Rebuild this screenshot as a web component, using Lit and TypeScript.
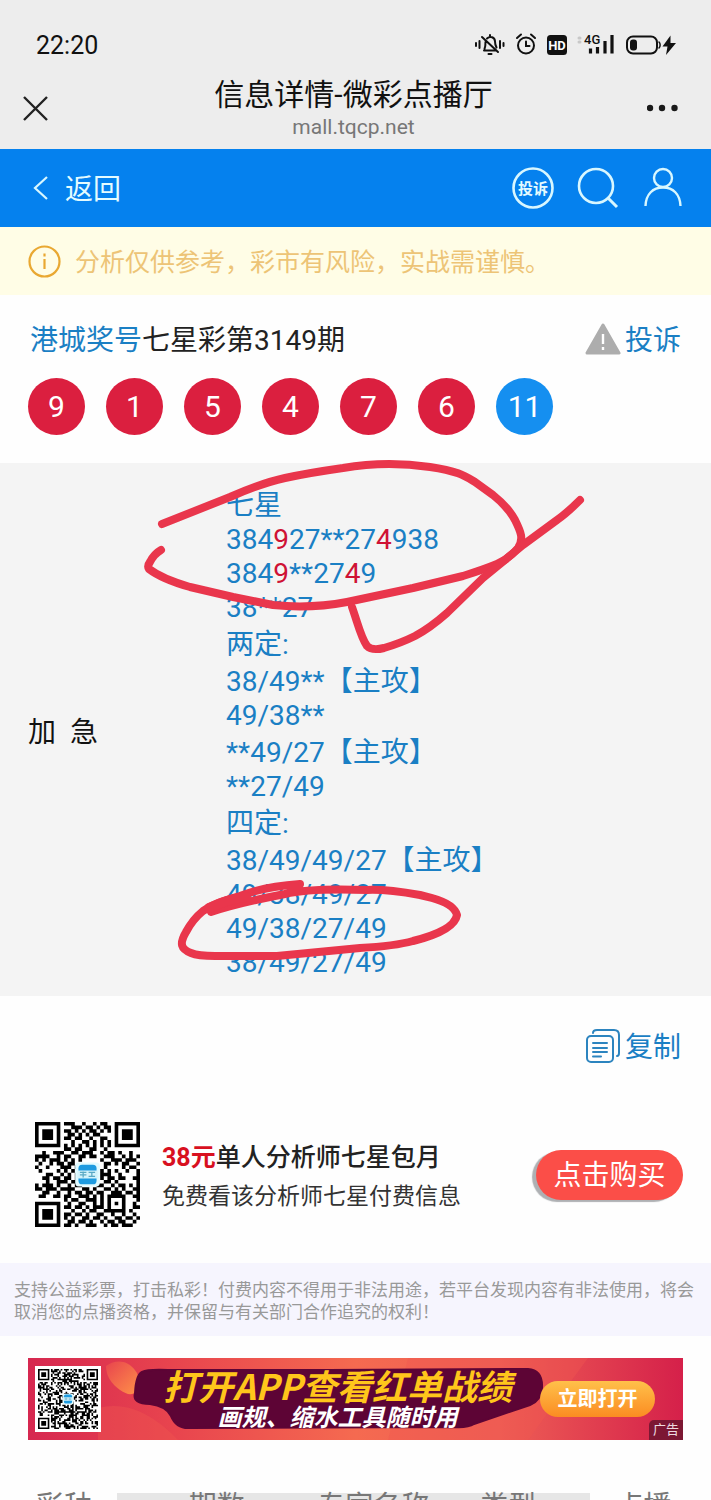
import { LitElement, html, svg, css } from "lit";
import { customElement, property } from "lit/decorators.js";

const QR_ROWS = [
  "11111110111001001011001111111",
  "10000010001110110101101000001",
  "10111010110101011010101011101",
  "10111010011010101100001011101",
  "10111010110110010011001011101",
  "10000010001001101010101000001",
  "11111110101010101010101111111",
  "00000000110110011001000000000",
  "00100111001101110010110100100",
  "11110010110011011001110010101",
  "10101110101010000010011101110",
  "01001011011000000001101011001",
  "10010001110100000001000010110",
  "01000010101000000010101001001",
  "00011001010100000011100100001",
  "00110110110100000010110110011",
  "00010011101100000001101000001",
  "10111010010110000110010110101",
  "11011101111001101001101010011",
  "00110010010110110110011101101",
  "01100110110011101010111110011",
  "00000000101100111010100010001",
  "11111110010011001010101010010",
  "10000010110110101110100010011",
  "10111010001001011001111110100",
  "10111010110110100110010010010",
  "10111010101001101101001101101",
  "10000010011011010010110110010",
  "11111110110100111001011011100",
];

/** Square code with finder marks in three corners and a small brand tile in the middle. */
@customElement("qr-code")
class QrCode extends LitElement {
  @property({ type: Boolean }) dense = false;

  static styles = css`
    :host { display: block; }
    .code { display: block; width: 100%; height: auto; }
  `;

  private modules() {
    if (!this.dense) return QR_ROWS.map((r) => r.split("").map((c) => c === "1"));
    const n = 37;
    let seed = 97;
    return Array.from({ length: n }, () =>
      Array.from({ length: n }, () => {
        seed = (seed * 1103515245 + 12345) % 2147483648;
        return seed / 2147483648 > 0.5;
      })
    );
  }

  render() {
    const rows = this.modules();
    const n = rows.length;
    let d = "";
    rows.forEach((row, y) =>
      row.forEach((on, x) => {
        const corner = (x < 8 && y < 8) || (x > n - 9 && y < 8) || (x < 8 && y > n - 9);
        if (on && !corner) d += `M${x} ${y}h1v1h-1z`;
      })
    );
    const finder = (x: number, y: number) => svg`
      <path fill="#000" fill-rule="evenodd" d=${`M${x} ${y}h7v7h-7zM${x + 1} ${y + 1}v5h5v-5zM${x + 2} ${y + 2}h3v3h-3z`}></path>`;
    const c = n / 2;
    return html`
      <svg class="code" viewBox="0 0 ${n} ${n}" shape-rendering="geometricPrecision" role="img" aria-label="二维码">
        <rect width=${n} height=${n} fill="#fff"></rect>
        <path d=${d} fill="#000"></path>
        ${finder(0, 0)}${finder(n - 7, 0)}${finder(0, n - 7)}
        <rect x=${c - 3.4} y=${c - 3.3} width="6.8" height="6.6" rx="1" fill="#e2fbff"></rect>
        <rect x=${c - 2.5} y=${c - 2.7} width="5" height="5.4" rx="1" fill="#1e9be0"></rect>
        <rect x=${c - 2.8} y=${c - 1.1} width="5.6" height="2.2" fill="#d3f3fb"></rect>
        <path d=${`M${c - 2.1} ${c - 0.6}h1.8M${c - 2.1} ${c + 0.1}h1.8M${c - 1.2} ${c - 0.8}v1.6M${c + 0.3} ${c - 0.6}h1.8M${c + 0.3} ${c + 0.5}h1.8M${c + 1.2} ${c - 0.6}v1.2`} stroke="#5aa9c4" stroke-width=".35"></path>
      </svg>`;
  }
}

const LINES: string[] = [
  "七星",
  "384[9]27**27[4]938",
  "384[9]**27[4]9",
  "38**27",
  "两定:",
  "38/49**【主攻】",
  "49/38**",
  "**49/27【主攻】",
  "**27/49",
  "四定:",
  "38/49/49/27【主攻】",
  "49/38/49/27",
  "49/38/27/49",
  "38/49/27/49",
];

@customElement("app-root")
class AppRoot extends LitElement {
  static styles = css`
    :host {
      display: block;
      height: 100vh;
      overflow: hidden;
      background: #fefefe;
      color: #222;
      font-family: Roboto, "Noto Sans CJK SC", sans-serif;
      font-size: 28px;
      line-height: 34px;
    }
    a { color: inherit; text-decoration: none; }
    button { font: inherit; color: inherit; border: 0; padding: 0; margin: 0; background: none; cursor: pointer; }
    svg { display: block; flex: none; }
    h1, p, ol, ul { margin: 0; padding: 0; font-weight: 400; list-style: none; }
    .label { padding-top: 4px; }

    .chrome { background: #ededed; color: #111; padding-bottom: 9px; }
    .status { display: flex; justify-content: space-between; align-items: center; padding: 28px 34px 0 36px; font-size: 25px; line-height: 32px; }
    .clock { padding-top: 2px; }
    .titlebar { display: grid; grid-template-columns: 60px 1fr 60px; align-items: center; padding: 13px 24px 0 20px; }
    .titles { text-align: center; }
    .title { font-size: 30px; line-height: 40px; }
    .host { font-size: 21px; line-height: 25px; color: #777; }
    .close { justify-self: start; }
    .more { justify-self: end; }

    .nav { display: flex; align-items: center; justify-content: space-between; height: 78px; padding: 0 26px 0 30px; background: #0581ee; color: #e4fbff; }
    .back { display: flex; align-items: center; gap: 13px; }
    .tools { display: flex; gap: 21px; }

    .notice { display: flex; align-items: center; gap: 14px; padding: 15px 28px; background: #fffde6; color: #edc476; font-size: 25px; }

    .issue { display: flex; align-items: center; justify-content: space-between; padding: 25px 30px 0; }
    .link { color: #1a7fc4; }
    .report, .copy { display: flex; align-items: center; gap: 4px; color: #1a7fc4; }
    .balls { display: flex; gap: 21px; padding: 20px 28px 28px; }
    .ball { width: 57px; height: 57px; border-radius: 50%; background: #db1f3f; color: #fff; font-size: 30px; line-height: 57px; text-align: center; }
    .special { background: #158ff0; }

    .panel { position: relative; display: grid; grid-template-columns: 29% 1fr; align-items: center; padding: 23px 0 16px 28px; background: #f4f4f4; }
    .urgent { color: #111; }
    .picks { color: #1a7fc4; }
    .wide { padding-top: 3px; }
    .hit { color: #cf1234; }
    .ink { position: absolute; inset: 0; width: 100%; height: 100%; pointer-events: none; }

    .copyrow { display: flex; justify-content: flex-end; padding: 31px 30px 0; }

    .offer { display: flex; align-items: center; padding: 57px 28px 36px 35px; }
    .offercode { width: 105px; flex: none; }
    .offertext { flex: 1; padding: 5px 0 0 22px; }
    .plan { font-size: 25px; line-height: 40px; font-weight: 500; color: #222; }
    .price { color: #d8101f; font-weight: 700; }
    .perk { font-size: 23px; line-height: 38px; color: #333; }
    .buy { width: 147px; height: 50px; padding-top: 3px; border-radius: 25px; background: #fb4e48; color: #fff; box-shadow: -4px 2px 1px #aeb0b3; }

    .legal { padding: 16px 14px 13px; background: #f6f5fe; color: #999; font-size: 17px; line-height: 22px; }

    .ad { position: relative; display: flex; align-items: center; height: 82px; margin: 22px 28px 0; overflow: hidden; }
    .adart { position: absolute; inset: 0; width: 100%; height: 100%; }
    .adcode { position: relative; width: 60px; flex: none; margin-left: 7px; padding: 3px; background: #fff; }
    .adtext { position: relative; flex: 1; padding-left: 34px; text-align: center; font-family: "Noto Sans CJK SC", sans-serif; font-style: italic; white-space: nowrap; }
    .adhead { font-size: 35px; line-height: 34px; color: #ffc61b; font-weight: 700; }
    .adsub { font-size: 24px; line-height: 28px; color: #fff; font-weight: 700; }
    .open { position: relative; width: 115px; height: 36px; margin: 0 28px 0 0; border-radius: 18px; background: linear-gradient(#ffc04a, #fb8c22); color: #fff; font-size: 20px; font-weight: 700; }
    .tag { position: absolute; right: 0; bottom: 0; padding: 0 4px; border-radius: 5px 0 0 0; background: #7c1733; color: #eedbe0; font-size: 13px; line-height: 20px; }

    .records { width: 100%; margin-top: 53px; border-spacing: 0; table-layout: fixed; color: #777; background: linear-gradient(90deg, transparent 117px, #e6e6e6 117px, #e6e6e6 83%, transparent 83%); }
    .records th { padding: 0; font-weight: 400; line-height: 28px; white-space: nowrap; }
    .c18 { width: 18%; }
    .c25 { width: 25%; }
    .c19 { width: 19%; }
  `;

  private line(text: string) {
    return text.split(/(\[\d\])/).map((p) => (/^\[\d\]$/.test(p) ? html`<span class="hit">${p[1]}</span>` : p));
  }

  render() {
    return html`
      <header class="chrome">
        <div class="status">
          <time class="clock">22:20</time>
          <svg width="203" height="24" viewBox="0 0 203 24" fill="none" stroke="#111" stroke-width="2" stroke-linecap="round">
            <path d="M2 10v3M5.500 8v7M26 8v7M29.500 10v3M8 4l16 15M10 17.500h11M10.500 16c1-2 1-4 1-7M13 5.500c3-3 8-1.500 8 3 0 3 .5 4 1.500 6M16 2v1M14.500 21h3"></path>
            <circle cx="52" cy="12.500" r="8"></circle>
            <path d="M52 8.500v4.500h3.500M43 5l4-3.500M61 5l-4-3.500"></path>
            <rect x="73" y="2" width="20" height="20" rx="3.500" fill="#111" stroke="none"></rect>
            <text x="83" y="17" text-anchor="middle" font-size="13" font-weight="700" fill="#fff" stroke="none">HD</text>
            <path d="M105 5h1M105 9h1" stroke="#c8c8c8" stroke-width="3"></path>
            <text x="110" y="11" font-size="13" font-weight="500" fill="#111" stroke="none">4G</text>
            <path d="M116.500 15.500v5M123.500 14v6.500M131 8v12.500M138 2v18.500" stroke-width="3.200" stroke-linecap="butt"></path>
            <rect x="153" y="3.500" width="30" height="17" rx="6"></rect>
            <rect x="156" y="6.500" width="7" height="11" rx="3" fill="#111" stroke="none"></rect>
            <path d="M185 9c1.500 1.500 1.500 4.500 0 6" stroke-width="1.500"></path>
            <path d="M196.500 2.500l-8 11h5l-1.500 8.500 10-12h-5.500z" fill="#111" stroke="none"></path>
          </svg>
        </div>
        <div class="titlebar">
          <button class="close" aria-label="关闭">
            <svg width="32" height="32" viewBox="0 0 32 32" fill="none" stroke="#222" stroke-width="2.400"><path d="M4 5l23 23M27 5L4 28"></path></svg>
          </button>
          <div class="titles">
            <h1 class="title">信息详情-微彩点播厅</h1>
            <p class="host">mall.tqcp.net</p>
          </div>
          <button class="more" aria-label="更多">
            <svg width="40" height="32" viewBox="0 0 40 32" fill="#1a1a1a"><circle cx="3" cy="16" r="3.200"></circle><circle cx="15" cy="16" r="3.200"></circle><circle cx="27.500" cy="16" r="3.200"></circle></svg>
          </button>
        </div>
      </header>

      <nav class="nav">
        <a class="back" href="#">
          <svg width="22" height="26" viewBox="0 0 22 26" fill="none" stroke="#d8f7ff" stroke-width="2.200"><path d="M17 2L5 13l12 11"></path></svg>
          <span class="label">返回</span>
        </a>
        <div class="tools">
          <a href="#" aria-label="投诉">
            <svg width="44" height="44" viewBox="0 0 44 44"><circle cx="22" cy="22" r="19.500" fill="none" stroke="#d8f7ff" stroke-width="2.600"></circle><text x="22" y="28" text-anchor="middle" font-size="15" font-weight="700" fill="#e4fbff">投诉</text></svg>
          </a>
          <a href="#" aria-label="搜索">
            <svg width="44" height="44" viewBox="0 0 44 44" fill="none" stroke="#d8f7ff" stroke-width="2.600"><circle cx="20" cy="20" r="17"></circle><path d="M32 32l9 9" stroke-width="3"></path></svg>
          </a>
          <a href="#" aria-label="我的">
            <svg width="44" height="44" viewBox="0 0 44 44" fill="none" stroke="#d8f7ff" stroke-width="2.400"><circle cx="22" cy="12" r="9"></circle><path d="M4.500 40C5 28 12 21.500 22 21.500S39 28 39.500 40"></path></svg>
          </a>
        </div>
      </nav>

      <div class="notice">
        <svg width="33" height="33" viewBox="0 0 33 33" fill="none" stroke="#e9a832" stroke-width="2.200"><circle cx="16.500" cy="16.500" r="15"></circle><path d="M16.500 14v10M16.500 8.500v3"></path></svg>
        <span class="label">分析仅供参考，彩市有风险，实战需谨慎。</span>
      </div>

      <div class="issue">
        <p class="label"><a class="link" href="#">港城奖号</a>七星彩第3149期</p>
        <a class="report" href="#">
          <svg width="36" height="32" viewBox="0 0 36 32"><path d="M18 2L34 30H2z" fill="#adadad" stroke="#adadad" stroke-width="3" stroke-linejoin="round"></path><path d="M18 11v10M18 24v3" stroke="#fff" stroke-width="2.400"></path></svg>
          <span class="label">投诉</span>
        </a>
      </div>
      <ol class="balls">
        ${[9, 1, 5, 4, 7, 6].map((n) => html`<li class="ball">${n}</li>`)}
        <li class="ball special">11</li>
      </ol>

      <section class="panel">
        <div class="urgent">加&nbsp;&nbsp;急</div>
        <div class="picks">
          ${LINES.map((t) => html`<p class=${/[\u4e00-\u9fff]/.test(t) ? "wide" : ""}>${this.line(t)}</p>`)}
        </div>
        <svg class="ink" viewBox="0 463 711 533" preserveAspectRatio="none" overflow="visible" fill="none" stroke="#e9364c" stroke-width="8" stroke-linecap="round" stroke-linejoin="round">
          <path d="M162 524L230 497Q262 483 285 478T343 468C372 463 402 463 430 467S465 476 475 482L493 495Q508 507 515 520C521 532 524 539 518 548Q509 559 497 564T463 576L413 588 347 602Q310 609 273 605L233 597 190 587Q162 579 149 569Q147 566 150 562Q154 554 161 550"></path>
          <path d="M352 607C358 624 361 638 367 646Q372 651 384 648Q401 643 415 636Q430 628 447 613L483 578 523 545 557 520Q567 513 580 500"></path>
          <path d="M300 884Q262 887 240 896Q214 903 203 911Q193 919 186 932C179 944 181 949 191 953Q198 956 215 956H277Q320 952 360 948Q395 946 413 941C437 935 455 927 457 915Q454 904 432 898L420 895Q385 889 367 890Q310 888 285 894Q238 903 211 912"></path>
          <path d="M209 908Q228 899 246 897" stroke-width="10"></path>
        </svg>
      </section>

      <div class="copyrow">
        <button class="copy">
          <svg width="36" height="36" viewBox="0 0 36 36" fill="none" stroke="#2c84bf" stroke-width="2" stroke-linecap="round"><rect x="2" y="8" width="26" height="26" rx="4"></rect><path d="M8 5Q8 2 12 2H29Q34 2 34 7V25Q34 28 32 28M8 15h14M8 20h14M8 24h14M8 28.500h8"></path></svg>
          <span class="label">复制</span>
        </button>
      </div>

      <section class="offer">
        <qr-code class="offercode"></qr-code>
        <div class="offertext">
          <p class="plan"><span class="price">38元</span>单人分析师七星包月</p>
          <p class="perk">免费看该分析师七星付费信息</p>
        </div>
        <button class="buy">点击购买</button>
      </section>

      <p class="legal">支持公益彩票，打击私彩！付费内容不得用于非法用途，若平台发现内容有非法使用，将会取消您的点播资格，并保留与有关部门合作追究的权利！</p>

      <aside class="ad">
        <svg class="adart" viewBox="0 0 655 82" preserveAspectRatio="none">
          <defs>
            <linearGradient id="warm"><stop offset="0" stop-color="#d62850"></stop><stop offset=".22" stop-color="#e8444e"></stop><stop offset=".5" stop-color="#f56a50"></stop><stop offset=".72" stop-color="#ee5f55"></stop><stop offset="1" stop-color="#d5204a"></stop></linearGradient>
            <linearGradient id="glow" x2="1" y2="1"><stop offset="0" stop-color="#e8444e"></stop><stop offset="1" stop-color="#ff9248"></stop></linearGradient>
          </defs>
          <rect width="655" height="82" fill="url(#warm)"></rect>
          <path d="M70 50Q110 40 150 82H70zM380 0H560L500 82H360z" fill="#ef5750" opacity=".4"></path>
          <path d="M78 8C95-4 112 10 112 28Q106 42 92 32Q78 22 78 8z" fill="url(#glow)"></path>
          <path d="M114 14Q120 11 140 12L300 12 500 11Q515 12 514 30Q513 43 502 47L446 66Q440 70 425 69L160 70Q148 70 143 58Q138 48 122 46Q104 46 107 35Q108 17 114 14z" fill="#5d0435" stroke="#5d0435" stroke-width="2"></path>
        </svg>
        <qr-code class="adcode" dense></qr-code>
        <div class="adtext">
          <p class="adhead">打开APP查看红单战绩</p>
          <p class="adsub">画规、缩水工具随时用</p>
        </div>
        <button class="open">立即打开</button>
        <span class="tag">广告</span>
      </aside>

      <table class="records">
        <thead>
          <tr>
            <th class="c18">彩种</th>
            <th class="c25">期数</th>
            <th class="c19">专家名称</th>
            <th class="c19">类型</th>
            <th class="c19">点播</th>
          </tr>
        </thead>
      </table>
    `;
  }
}
